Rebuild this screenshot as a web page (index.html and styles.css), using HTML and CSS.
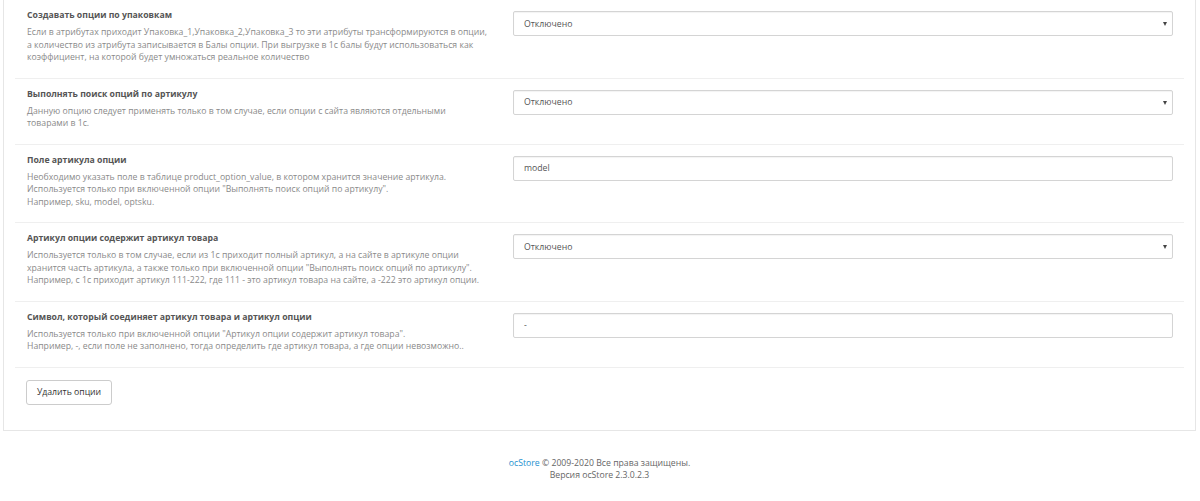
FILE: index.html
```html
<!DOCTYPE html>
<html lang="ru">
<head>
    <meta charset="UTF-8">
    <title>Настройки опций</title>
    <link rel="stylesheet" href="styles.css">
</head>
<body>
    <div class="panel">
        <div class="form-group">
            <div class="label-col">
                <div class="control-label">Создавать опции по упаковкам</div>
                <div class="help">Если в атрибутах приходит Упаковка_1,Упаковка_2,Упаковка_3 то эти атрибуты трансформируются в опции,<br>а количество из атрибута записывается в Балы опции. При выгрузке в 1с балы будут использоваться как<br>коэффициент, на которой будет умножаться реальное количество</div>
            </div>
            <div class="select-wrap">
                <select class="form-control">
                    <option>Отключено</option>
                    <option>Включено</option>
                </select>
            </div>
        </div>
        <div class="form-group">
            <div class="label-col">
                <div class="control-label">Выполнять поиск опций по артикулу</div>
                <div class="help">Данную опцию следует применять только в том случае, если опции с сайта являются отдельными<br>товарами в 1с.</div>
            </div>
            <div class="select-wrap">
                <select class="form-control">
                    <option>Отключено</option>
                    <option>Включено</option>
                </select>
            </div>
        </div>
        <div class="form-group">
            <div class="label-col">
                <div class="control-label">Поле артикула опции</div>
                <div class="help">Необходимо указать поле в таблице product_option_value, в котором хранится значение артикула.<br>Используется только при включенной опции "Выполнять поиск опций по артикулу".<br>Например, sku, model, optsku.</div>
            </div>
            <div>
                <input class="form-control" type="text" value="model">
            </div>
        </div>
        <div class="form-group">
            <div class="label-col">
                <div class="control-label">Артикул опции содержит артикул товара</div>
                <div class="help">Используется только в том случае, если из 1с приходит полный артикул, а на сайте в артикуле опции<br>хранится часть артикула, а также только при включенной опции "Выполнять поиск опций по артикулу".<br>Например, с 1с приходит артикул 111-222, где 111 - это артикул товара на сайте, а -222 это артикул опции.</div>
            </div>
            <div class="select-wrap">
                <select class="form-control">
                    <option>Отключено</option>
                    <option>Включено</option>
                </select>
            </div>
        </div>
        <div class="form-group">
            <div class="label-col">
                <div class="control-label">Символ, который соединяет артикул товара и артикул опции</div>
                <div class="help">Используется только при включенной опции "Артикул опции содержит артикул товара".<br>Например, -, если поле не заполнено, тогда определить где артикул товара, а где опции невозможно..</div>
            </div>
            <div>
                <input class="form-control" type="text" value="-">
            </div>
        </div>
        <div class="actions">
            <button class="btn" type="button">Удалить опции</button>
        </div>
    </div>

    <footer class="footer">
        <a href="#">ocStore</a> &copy; 2009-2020 Все права защищены.<br>
        Версия ocStore 2.3.0.2.3
    </footer>
</body>
</html>
```

FILE: styles.css
```css
body {
    margin: 0;
    padding: 0 4px 0 3px;
    font-family: "Open Sans", "Liberation Sans", sans-serif;
    font-size: 8.7px;
    color: #666;
    background: #fff;
}
.panel {
    margin-top: -1px;
    border: 1px solid #e6e6e6;
    background: #fff;
}
.form-group {
    display: grid;
    grid-template-columns: 474px 1fr;
    gap: 12px;
    margin: 0 11px;
    padding: 11px 11px 14px 12px;
    border-bottom: 1px solid #efefef;
}
.label-col {
    margin-top: -2px;
}
.control-label {
    font-weight: 700;
    color: #555;
    line-height: 13px;
    margin-bottom: 4px;
    white-space: nowrap;
}
.help {
    color: #8a8a8a;
    line-height: 12.5px;
    white-space: nowrap;
}
.form-control {
    display: block;
    box-sizing: border-box;
    width: 100%;
    height: 25px;
    padding: 0 10px;
    border: 1px solid #d4d4d4;
    border-radius: 2px;
    background: #fff;
    box-shadow: inset 0 1px 1px rgba(0, 0, 0, 0.05);
    font-family: inherit;
    font-size: 8.7px;
    color: #555;
    outline: none;
}
select.form-control {
    appearance: none;
    -webkit-appearance: none;
}
.select-wrap {
    position: relative;
}
.select-wrap::after {
    content: "";
    position: absolute;
    right: 6px;
    top: 11px;
    border-left: 2px solid transparent;
    border-right: 2px solid transparent;
    border-top: 4px solid #444;
}
.actions {
    padding: 12px 22px 25px;
}
.btn {
    display: block;
    width: 86px;
    height: 25px;
    padding: 0;
    border: 1px solid #ccc;
    border-radius: 3px;
    background: #fff;
    font-family: inherit;
    font-size: 8.7px;
    color: #333;
    cursor: pointer;
}
.footer {
    padding-top: 26px;
    text-align: center;
    line-height: 12.5px;
    color: #666;
}
.footer a {
    color: #1e91cf;
    text-decoration: none;
}
```
